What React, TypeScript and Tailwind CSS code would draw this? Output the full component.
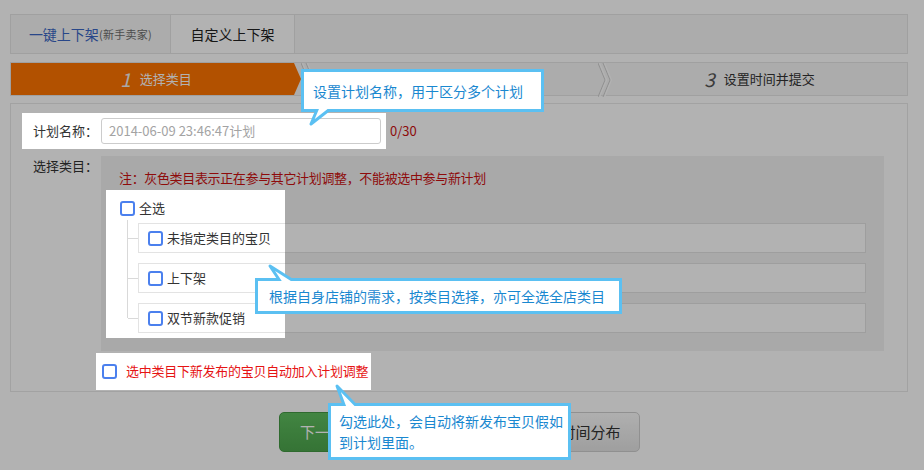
import React from "react";

function Cb() {
  return <span className="inline-block w-[15px] h-[15px] shrink-0 rounded-[3px] border-2 border-[#4b80ee] bg-white" />;
}

function Chevron() {
  return (
    <svg width="14" height="34" viewBox="0 0 14 34" className="shrink-0">
      <polyline points="0,0 7,17 0,34" fill="none" stroke="#cfcfcf" strokeWidth="1" />
      <polyline points="1.5,0 8.5,17 1.5,34" fill="none" stroke="#ffffff" strokeWidth="1.2" />
      <polyline points="5,0 12,17 5,34" fill="none" stroke="#cfcfcf" strokeWidth="1" />
      <polyline points="6.5,0 13.5,17 6.5,34" fill="none" stroke="#ffffff" strokeWidth="1.2" />
    </svg>
  );
}

function Row({ label }: { label: string }) {
  return (
    <div className="relative flex h-[30px] items-center gap-[4px] border border-[#e3e3e3] bg-white pl-[9px] text-[13px] leading-[18px] text-[#333]">
      <span className="absolute left-[-11px] top-[14px] h-px w-[10px] bg-[#d9d9d9]" />
      <Cb />
      <span>{label}</span>
    </div>
  );
}

export default function App() {
  return (
    <div className="relative h-[470px] w-[924px] overflow-hidden bg-white font-['Noto_Sans_CJK_SC',sans-serif] text-[#333]">
      <div className="ml-[10px] w-[898px] pt-[14px]">
        {/* tabs */}
        <div className="flex h-[40px] border border-[#e6e6e6] bg-[#f6f6f6]">
          <div className="flex w-[160px] items-center justify-center border-r border-[#e6e6e6] text-[14px] leading-[20px] text-[#3a66c4]">
            一键上下架<span className="text-[11px] tracking-[0.3px] text-[#6e6e6e]">(新手卖家)</span>
          </div>
          <div className="flex w-[124px] items-center justify-center border-r border-[#e6e6e6] bg-white text-[14px] leading-[20px] text-[#222]">
            自定义上下架
          </div>
        </div>

        {/* steps */}
        <div className="mt-[8px] flex h-[34px] border border-[#e6e6e6] bg-[#f6f6f6]">
          <div className="flex w-[290px] shrink-0 items-center justify-center gap-[9px] bg-[#ff7400] text-white [clip-path:polygon(0_0,calc(100%-7px)_0,100%_50%,calc(100%-7px)_100%,0_100%)]">
            <span className="text-[19px] italic leading-[20px] text-[#f3f3f3]">1</span>
            <span className="text-[13px] leading-[18px]">选择类目</span>
          </div>
          <Chevron />
          <div className="w-[283px] shrink-0" />
          <Chevron />
          <div className="flex flex-1 items-center justify-center gap-[9px]">
            <span className="text-[19px] italic leading-[20px] text-[#555]">3</span>
            <span className="text-[13px] leading-[18px]">设置时间并提交</span>
          </div>
        </div>

        {/* main panel */}
        <div className="mt-[7px] border border-[#e8e8e8] px-[22px] pb-[10px] pt-[14px]">
          <div className="flex h-[26px] items-center">
            <span className="w-[68px] shrink-0 text-[13px] leading-[18px]">计划名称：</span>
            <div className="flex h-[26px] w-[280px] items-center rounded-[3px] border border-[#cccccc] px-[7px] text-[13px] leading-[18px] text-[#a3a3a3]">
              2014-06-09 23:46:47计划
            </div>
            <span className="ml-[9px] text-[13px] leading-[18px] text-[#cc1111]">0/30</span>
          </div>

          <div className="mt-[12px] flex">
            <span className="w-[68px] shrink-0 pt-[1px] text-[13px] leading-[18px]">选择类目：</span>
            <div className="w-[783px] bg-[#f3f3f3] px-[18px] pb-[18px] pt-[12px]">
              <p className="text-[13px] leading-[20px] tracking-[-0.35px] text-[#cc1111]">
                注：灰色类目表示正在参与其它计划调整，不能被选中参与新计划
              </p>
              <div className="relative mt-[8px]">
                <div className="absolute left-[-13px] top-[-6px] h-[148px] w-[179px] bg-white" />
                <div className="relative flex h-[24px] items-center gap-[4px] pl-[1px] text-[13px] leading-[18px]">
                  <Cb />
                  <span>全选</span>
                </div>
                <div className="relative ml-[19px] mt-[3px] flex flex-col gap-[10px]">
                  <span className="absolute left-[-11px] top-[-3px] h-[98px] w-px bg-[#d9d9d9]" />
                  <Row label="未指定类目的宝贝" />
                  <Row label="上下架" />
                  <Row label="双节新款促销" />
                </div>
              </div>
            </div>
          </div>

          <div className="ml-[69px] mt-[10px] flex h-[20px] items-center gap-[9px]">
            <Cb />
            <span className="text-[13px] leading-[18px] tracking-[-0.25px] text-[#e61414]">选中类目下新发布的宝贝自动加入计划调整</span>
          </div>
        </div>

        {/* buttons */}
        <div className="mt-[20px] flex justify-center gap-[10px]">
          <button className="h-[40px] w-[94px] rounded-[5px] border border-[#449944] bg-gradient-to-b from-[#5fbf5f] to-[#4da64d] pr-[6px] text-[15px] text-white">
            下一步
          </button>
          <button className="flex h-[40px] w-[257px] items-center justify-end rounded-[5px] border border-[#cfcfcf] bg-gradient-to-b from-[#fbfbfb] to-[#e4e4e4] pr-[18px] text-[15px] text-[#333]">
            时间分布
          </button>
        </div>
      </div>

      {/* guide overlay */}
      <svg className="pointer-events-none absolute left-0 top-0" width="924" height="470">
        <path
          fillRule="evenodd"
          fill="rgba(0,0,0,0.3)"
          d="M0 0H924V470H0Z M22 113V149H386V113Z M106 190V338H285V190Z M96 353V390H371V353Z"
        />
      </svg>

      {/* tooltip 1 */}
      <div className="absolute left-[301px] top-[69px] flex h-[43px] w-[243px] items-center border-[3px] border-[#5bc0f2] bg-white pl-[9px] text-[14px] leading-[20px] text-[#1a88d0]">
        设置计划名称，用于区分多个计划
      </div>
      <svg className="absolute left-[304px] top-[106px]" width="30" height="20">
        <polygon points="14,1.5 28,1.5 7,18" fill="#fff" stroke="#5bc0f2" strokeWidth="3" strokeLinejoin="round" />
        <rect x="8" y="0" width="22" height="3" fill="#fff" />
      </svg>

      {/* tooltip 2 */}
      <div className="absolute left-[255px] top-[278px] flex h-[36px] w-[367px] items-center border-[3px] border-[#5bc0f2] bg-white pl-[11px] text-[14px] leading-[20px] text-[#1a88d0]">
        根据自身店铺的需求，按类目选择，亦可全选全店类目
      </div>
      <svg className="absolute left-[266px] top-[263px]" width="34" height="22">
        <polygon points="4,3 15,19.5 30,19.5" fill="#fff" stroke="#5bc0f2" strokeWidth="3" strokeLinejoin="round" />
        <rect x="10" y="18" width="24" height="4" fill="#fff" />
      </svg>

      {/* tooltip 3 */}
      <div className="absolute left-[328px] top-[403px] h-[57px] w-[243px] border-[3px] border-[#5bc0f2] bg-white pl-[8px] pt-[5px] text-[14px] leading-[21px] text-[#1a88d0]">
        <div>勾选此处，会自动将新发布宝贝假如</div>
        <div>到计划里面。</div>
      </div>
      <svg className="absolute left-[333px] top-[383px]" width="30" height="27">
        <polygon points="4,3 12,24.5 25,24.5" fill="#fff" stroke="#5bc0f2" strokeWidth="3" strokeLinejoin="round" />
        <rect x="8" y="23" width="22" height="4" fill="#fff" />
      </svg>
    </div>
  );
}
